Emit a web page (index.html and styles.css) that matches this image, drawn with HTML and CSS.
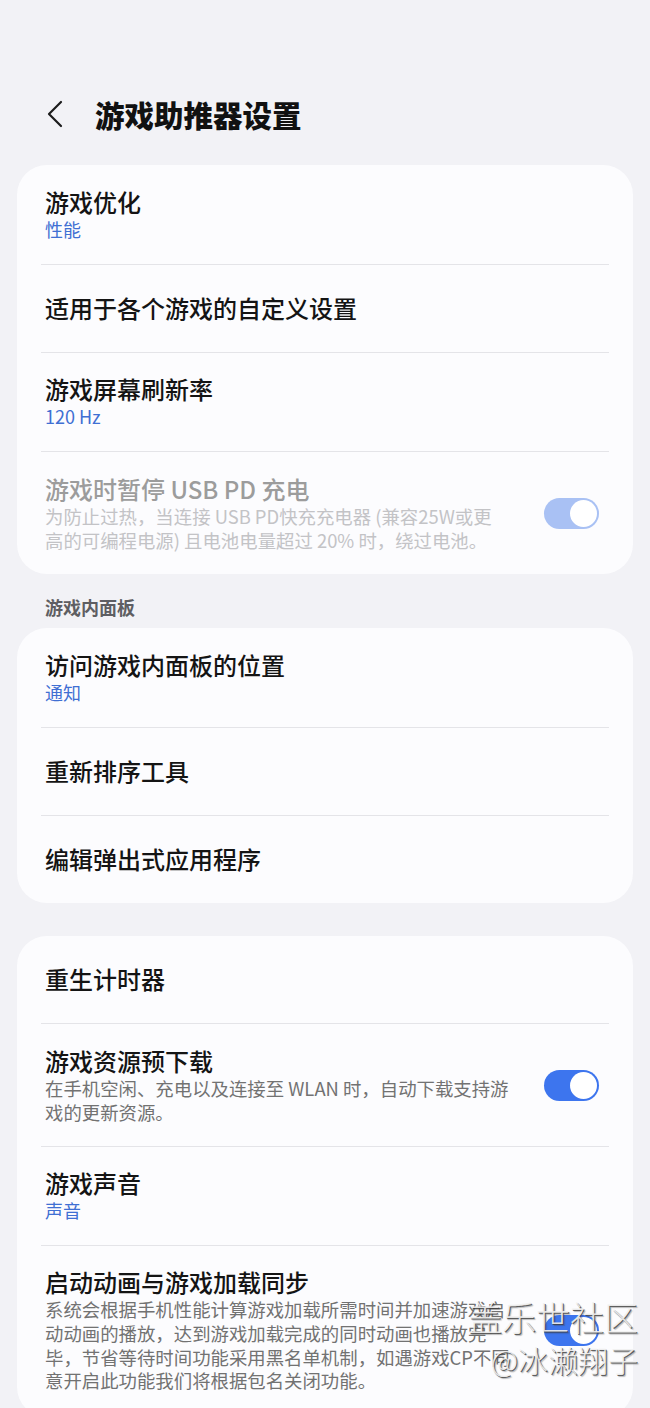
FILE: index.html
```html
<!DOCTYPE html>
<html lang="zh-CN">
<head>
<meta charset="utf-8">
<title>游戏助推器设置</title>
<link rel="stylesheet" href="styles.css">
</head>
<body>
<div class="page">
  <header class="topbar">
    <svg class="back" width="18" height="28" viewBox="0 0 18 28" aria-hidden="true">
      <path d="M15 2 L3 14 L15 26" fill="none" stroke="#1c1c1c" stroke-width="2.2" stroke-linecap="round" stroke-linejoin="round"/>
    </svg>
    <h1 class="title">游戏助推器设置</h1>
  </header>

  <section class="card">
    <div class="row two">
      <div class="text"><div class="t">游戏优化</div><div class="sub">性能</div></div>
    </div>
    <div class="row one">
      <div class="text"><div class="t">适用于各个游戏的自定义设置</div></div>
    </div>
    <div class="row two">
      <div class="text"><div class="t">游戏屏幕刷新率</div><div class="sub">120 Hz</div></div>
    </div>
    <div class="row desc-row disabled">
      <div class="text">
        <div class="t">游戏时暂停 USB PD 充电</div>
        <div class="desc">为防止过热，当连接 USB PD快充充电器 (兼容25W或更<br>高的可编程电源) 且电池电量超过 20% 时，绕过电池。</div>
      </div>
      <div class="toggle dim"><span class="knob"></span></div>
    </div>
  </section>

  <div class="section-label">游戏内面板</div>

  <section class="card">
    <div class="row two">
      <div class="text"><div class="t">访问游戏内面板的位置</div><div class="sub">通知</div></div>
    </div>
    <div class="row one">
      <div class="text"><div class="t">重新排序工具</div></div>
    </div>
    <div class="row one">
      <div class="text"><div class="t">编辑弹出式应用程序</div></div>
    </div>
  </section>

  <section class="card card-gap">
    <div class="row one">
      <div class="text"><div class="t">重生计时器</div></div>
    </div>
    <div class="row desc-row">
      <div class="text">
        <div class="t">游戏资源预下载</div>
        <div class="desc">在手机空闲、充电以及连接至 WLAN 时，自动下载支持游<br>戏的更新资源。</div>
      </div>
      <div class="toggle"><span class="knob"></span></div>
    </div>
    <div class="row two">
      <div class="text"><div class="t">游戏声音</div><div class="sub">声音</div></div>
    </div>
    <div class="row desc-row last">
      <div class="text">
        <div class="t">启动动画与游戏加载同步</div>
        <div class="desc">系统会根据手机性能计算游戏加载所需时间并加速游戏启<br>动动画的播放，达到游戏加载完成的同时动画也播放完<br>毕，节省等待时间功能采用黑名单机制，如遇游戏CP不同<br>意开启此功能我们将根据包名关闭功能。</div>
      </div>
      <div class="toggle"><span class="knob"></span></div>
    </div>
  </section>

  <div class="watermark">
    <div class="wm-big">盖乐世社区</div>
    <div class="wm-small">@冰濑翔子</div>
  </div>
</div>
</body>
</html>
```

FILE: styles.css
```css
html, body {
  margin: 0;
  padding: 0;
  background: #f2f2f6;
}
body {
  font-family: "Noto Sans CJK SC", "Noto Sans", sans-serif;
  color: #141414;
}
.page {
  position: relative;
  width: 650px;
  padding-bottom: 20px;
  overflow: hidden;
}
.topbar {
  display: flex;
  align-items: center;
  height: 40px;
  padding: 94px 0 0 46px;
  margin-bottom: 31px;
}
.back {
  display: block;
  margin-right: 31px;
}
.title {
  margin: 0;
  font-size: 29.5px;
  font-weight: 900;
  line-height: 40px;
  color: #111;
}
.card {
  margin: 0 17px;
  background: #fcfcfe;
  border-radius: 30px;
  padding: 0 24px;
}
.card-gap {
  margin-top: 33px;
}
.row {
  display: flex;
  align-items: center;
  padding: 0 4px;
  border-top: 1px solid #e4e4e8;
}
.row:first-child {
  border-top: none;
}
.row.one {
  padding-top: 29px;
  padding-bottom: 30px;
}
.row.two {
  padding-top: 22px;
  padding-bottom: 22px;
}
.row.two:first-child {
  padding-top: 23px;
}
.row.desc-row {
  padding-top: 23px;
  padding-bottom: 22px;
}
.row.last {
  padding-top: 22px;
  padding-bottom: 24px;
}
.text {
  flex: 1;
  min-width: 0;
}
.t {
  font-size: 24px;
  font-weight: 500;
  line-height: 28px;
  white-space: nowrap;
}
.sub {
  font-size: 18px;
  line-height: 26px;
  color: #3f6fd3;
}
.desc {
  margin-top: 2px;
  font-size: 18.4px;
  line-height: 23.6px;
  color: #727272;
  white-space: nowrap;
}
.disabled .t {
  color: #9c9c9c;
}
.disabled .desc {
  color: #c3c3c6;
}
.toggle {
  flex: none;
  width: 55px;
  height: 31px;
  border-radius: 16px;
  background: #3d75ee;
  margin-right: 6px;
  margin-left: 10px;
  display: flex;
  align-items: center;
  justify-content: flex-end;
  box-sizing: border-box;
  padding-right: 2px;
}
.toggle.dim {
  background: #a9c1f4;
}
.knob {
  display: block;
  width: 27px;
  height: 27px;
  border-radius: 50%;
  background: #fff;
}
.section-label {
  font-size: 18px;
  font-weight: 700;
  line-height: 24px;
  color: #5e5e62;
  padding: 21px 0 9px 45px;
}
.watermark {
  position: absolute;
  right: 12px;
  top: 1295px;
  text-align: right;
  font-weight: 300;
  color: rgba(240, 240, 240, 0.92);
  text-shadow: 1px 1px 0 rgba(60, 60, 60, 0.8), 2px 2px 1px rgba(60, 60, 60, 0.35);
  pointer-events: none;
}
.wm-big {
  font-size: 34px;
  line-height: 44px;
}
.wm-small {
  font-size: 30px;
  line-height: 40px;
}
```
